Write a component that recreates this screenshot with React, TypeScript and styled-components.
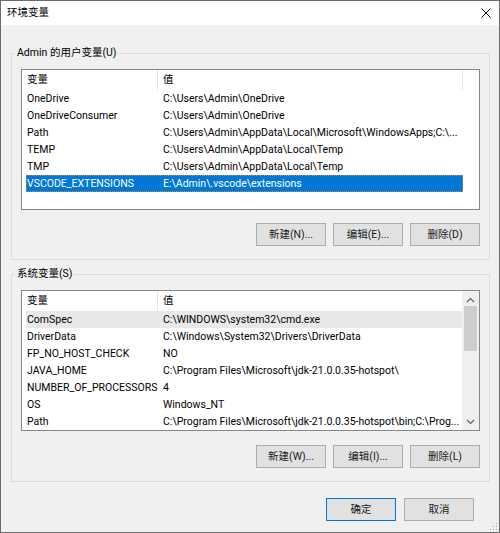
import styled, { createGlobalStyle, css } from 'styled-components';

const GlobalStyle = createGlobalStyle`
  html, body {
    margin: 0;
    padding: 0;
    background: #ffffff;
  }
  * {
    box-sizing: border-box;
  }
`;

const FONT = `Roboto, "Noto Sans CJK SC", sans-serif`;
const SIZE = '10.5px';

interface EnvVar {
  name: string;
  value: string;
  state?: 'selected' | 'hover';
}

const userVars: EnvVar[] = [
  { name: 'OneDrive', value: 'C:\\Users\\Admin\\OneDrive' },
  { name: 'OneDriveConsumer', value: 'C:\\Users\\Admin\\OneDrive' },
  { name: 'Path', value: 'C:\\Users\\Admin\\AppData\\Local\\Microsoft\\WindowsApps;C:\\...' },
  { name: 'TEMP', value: 'C:\\Users\\Admin\\AppData\\Local\\Temp' },
  { name: 'TMP', value: 'C:\\Users\\Admin\\AppData\\Local\\Temp' },
  { name: 'VSCODE_EXTENSIONS', value: 'E:\\Admin\\.vscode\\extensions', state: 'selected' },
];

const systemVars: EnvVar[] = [
  { name: 'ComSpec', value: 'C:\\WINDOWS\\system32\\cmd.exe', state: 'hover' },
  { name: 'DriverData', value: 'C:\\Windows\\System32\\Drivers\\DriverData' },
  { name: 'FP_NO_HOST_CHECK', value: 'NO' },
  { name: 'JAVA_HOME', value: 'C:\\Program Files\\Microsoft\\jdk-21.0.0.35-hotspot\\' },
  { name: 'NUMBER_OF_PROCESSORS', value: '4' },
  { name: 'OS', value: 'Windows_NT' },
  { name: 'Path', value: 'C:\\Program Files\\Microsoft\\jdk-21.0.0.35-hotspot\\bin;C:\\Prog...' },
];

const Window = styled.div`
  position: relative;
  width: 500px;
  height: 533px;
  border: 1px solid #6b6b6b;
  background: #f0f0f0;
  display: flex;
  flex-direction: column;
  font-family: ${FONT};
  font-size: ${SIZE};
  color: #000;
`;

const TitleBar = styled.div`
  height: 24px;
  background: #ffffff;
  display: flex;
  align-items: center;
  justify-content: space-between;
  padding: 0 8px 0 6px;
`;

const Title = styled.span`
  line-height: 16px;
`;

const Body = styled.div`
  flex: 1;
  display: flex;
  flex-direction: column;
  padding: 20px 9px 0 10px;
`;

const Group = styled.fieldset<{ $gapTop?: number }>`
  margin: ${({ $gapTop }) => $gapTop ?? 0}px 0 0 0;
  padding: 0 9px 13px 9px;
  border: 1px solid #dcdcdc;
  min-width: 0;
  display: flex;
  flex-direction: column;
`;

const Legend = styled.legend`
  margin-left: -6px;
  padding: 0 2px;
  font-size: ${SIZE};
  line-height: 16px;
`;

const ListView = styled.div`
  margin-top: 8px;
  height: 141px;
  border: 1px solid #828790;
  background: #ffffff;
  display: flex;
  overflow: hidden;
`;

const Table = styled.div`
  flex: 1;
  min-width: 0;
  display: flex;
  flex-direction: column;
`;

const Header = styled.div`
  display: flex;
  height: 20px;
`;

const HeaderCell = styled.div<{ $w: number }>`
  width: ${({ $w }) => $w}px;
  flex-shrink: 0;
  padding-left: 5px;
  line-height: 19px;
  border-right: 1px solid #e5e5e5;
  white-space: nowrap;
`;

const Row = styled.div<{ $state?: 'selected' | 'hover' }>`
  display: flex;
  width: 437px;
  margin-left: 4px;
  height: 17px;
  line-height: 17px;
  ${({ $state }) =>
    $state === 'selected' &&
    css`
      background: #0078d7;
      color: #ffffff;
      outline: 1px dotted #c7893a;
      outline-offset: -1px;
    `}
  ${({ $state }) =>
    $state === 'hover' &&
    css`
      background: #e8e8e8;
    `}
`;

const Cell = styled.div<{ $w: number; $pad: number }>`
  width: ${({ $w }) => $w}px;
  flex-shrink: 0;
  padding-left: ${({ $pad }) => $pad}px;
  white-space: nowrap;
  overflow: hidden;
`;

const ScrollBar = styled.div`
  width: 17px;
  flex-shrink: 0;
  background: #f0f0f0;
  display: flex;
  flex-direction: column;
  align-items: center;
`;

const ArrowBox = styled.div`
  width: 17px;
  height: 17px;
  display: flex;
  align-items: center;
  justify-content: center;
`;

const Track = styled.div`
  flex: 1;
  width: 100%;
  padding: 0 2px;
`;

const Thumb = styled.div`
  height: 45px;
  margin-top: -2px;
  background: #cdcdcd;
`;

const ButtonRow = styled.div<{ $top: number }>`
  margin-top: ${({ $top }) => $top}px;
  display: flex;
  justify-content: flex-end;
  gap: 7px;
`;

const Button = styled.button<{ $default?: boolean }>`
  width: 70px;
  height: 23px;
  padding: 0;
  margin: 0;
  background: #e1e1e1;
  border: 1px solid ${({ $default }) => ($default ? '#0078d7' : '#adadad')};
  font-family: ${FONT};
  font-size: ${SIZE};
  color: #1a1a1a;
  line-height: 21px;
  cursor: default;
`;

const Footer = styled.div`
  margin-top: 16px;
  padding-right: 16px;
  display: flex;
  justify-content: flex-end;
  gap: 8px;
`;

const Grip = styled.svg`
  position: absolute;
  right: 1px;
  bottom: 1px;
`;

const COL1 = 136;
const COL2 = 305;

const Arrow = ({ up }: { up?: boolean }) => (
  <svg width="9" height="6" viewBox="0 0 9 6">
    <polyline
      points={up ? '1,5 4.5,1.5 8,5' : '1,1 4.5,4.5 8,1'}
      fill="none"
      stroke="#606060"
      strokeWidth="1.2"
    />
  </svg>
);

const VarList = ({ items, scroll }: { items: EnvVar[]; scroll?: boolean }) => (
  <ListView>
    <Table>
      <Header>
        <HeaderCell $w={COL1}>变量</HeaderCell>
        <HeaderCell $w={COL2}>值</HeaderCell>
      </Header>
      {items.map((v) => (
        <Row key={v.name + v.value} $state={v.state}>
          <Cell $w={COL1 - 4} $pad={1}>{v.name}</Cell>
          <Cell $w={COL2} $pad={5}>{v.value}</Cell>
        </Row>
      ))}
    </Table>
    {scroll && (
      <ScrollBar>
        <ArrowBox>
          <Arrow up />
        </ArrowBox>
        <Track>
          <Thumb />
        </Track>
        <ArrowBox>
          <Arrow />
        </ArrowBox>
      </ScrollBar>
    )}
  </ListView>
);

export default function App() {
  return (
    <>
      <GlobalStyle />
      <Window>
        <TitleBar>
          <Title>环境变量</Title>
          <svg width="10" height="10" viewBox="0 0 10 10">
            <path d="M0.5 0.5 L9.5 9.5 M9.5 0.5 L0.5 9.5" stroke="#000" strokeWidth="1" />
          </svg>
        </TitleBar>
        <Body>
          <Group>
            <Legend>Admin 的用户变量(U)</Legend>
            <VarList items={userVars} />
            <ButtonRow $top={13}>
              <Button>新建(N)...</Button>
              <Button>编辑(E)...</Button>
              <Button>删除(D)</Button>
            </ButtonRow>
          </Group>
          <Group $gapTop={6}>
            <Legend>系统变量(S)</Legend>
            <VarList items={systemVars} scroll />
            <ButtonRow $top={14}>
              <Button>新建(W)...</Button>
              <Button>编辑(I)...</Button>
              <Button>删除(L)</Button>
            </ButtonRow>
          </Group>
          <Footer>
            <Button $default>确定</Button>
            <Button>取消</Button>
          </Footer>
        </Body>
        <Grip width="8" height="8" viewBox="0 0 8 8">
          <rect x="6" y="0" width="1" height="1" fill="#a0a0a0" />
          <rect x="3" y="3" width="1" height="1" fill="#a0a0a0" />
          <rect x="6" y="3" width="1" height="1" fill="#a0a0a0" />
          <rect x="0" y="6" width="1" height="1" fill="#a0a0a0" />
          <rect x="3" y="6" width="1" height="1" fill="#a0a0a0" />
          <rect x="6" y="6" width="1" height="1" fill="#a0a0a0" />
        </Grip>
      </Window>
    </>
  );
}
